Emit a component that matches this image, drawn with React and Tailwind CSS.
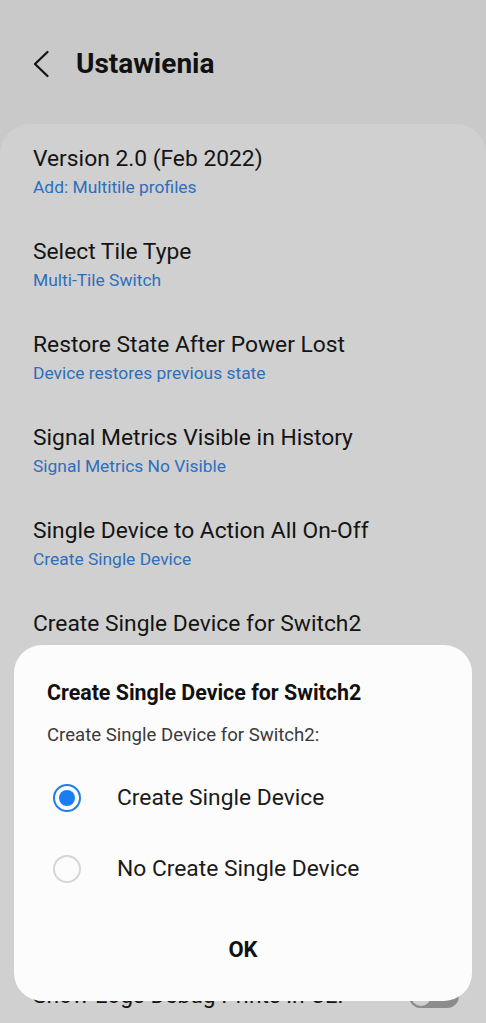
import { useState } from 'react';

const settings = [
  { id: 'version', title: 'Version 2.0 (Feb 2022)', value: 'Add: Multitile profiles' },
  { id: 'tileType', title: 'Select Tile Type', value: 'Multi-Tile Switch' },
  { id: 'restore', title: 'Restore State After Power Lost', value: 'Device restores previous state' },
  { id: 'metrics', title: 'Signal Metrics Visible in History', value: 'Signal Metrics No Visible' },
  { id: 'allOnOff', title: 'Single Device to Action All On-Off', value: 'Create Single Device' },
  { id: 'switch2', title: 'Create Single Device for Switch2', value: 'Create Single Device' },
  { id: 'switch3', title: 'Create Single Device for Switch3', value: 'No Create Single Device' },
  { id: 'switch4', title: 'Create Single Device for Switch4', value: 'No Create Single Device' },
  { id: 'switch5', title: 'Create Single Device for Switch5', value: 'No Create Single Device' },
];

const options = ['Create Single Device', 'No Create Single Device'];

function SettingRow({ item }) {
  return (
    <div className="pt-[21px] pb-[16px]">
      <div className="text-[22.8px] leading-[28px] text-[#141414]">{item.title}</div>
      <div className="text-[17.4px] leading-[28px] text-[#2d6fbd]">{item.value}</div>
    </div>
  );
}

function Radio({ checked }) {
  return checked ? (
    <span className="flex h-[28px] w-[28px] shrink-0 items-center justify-center rounded-full border-2 border-[#1f7fe8]">
      <span className="h-[16px] w-[16px] rounded-full bg-[#1a7ef0]" />
    </span>
  ) : (
    <span className="block h-[28px] w-[28px] shrink-0 rounded-full border-2 border-[#d6d6d6]" />
  );
}

export default function App() {
  const [selected, setSelected] = useState(0);

  return (
    <div
      className="relative h-[1023px] w-[486px] overflow-hidden bg-[#c9c9c9]"
      style={{ fontFamily: 'Roboto, "Noto Sans", sans-serif' }}
    >
      {/* Header */}
      <div className="flex h-[124px] items-center pt-[4px]">
        <svg className="ml-[33px] h-[28px] w-[16px] shrink-0" viewBox="0 0 16 28" fill="none">
          <polyline points="14.5,2 2,14 14.5,26" stroke="#111" strokeWidth="2.2" strokeLinecap="round" strokeLinejoin="round" />
        </svg>
        <h1 className="ml-[27px] text-[28px] font-bold leading-none text-[#111]">Ustawienia</h1>
      </div>

      {/* Settings list (dimmed behind the dialog) */}
      <div className="rounded-t-[30px] bg-[#d0d0d0] px-[33px]">
        {settings.map((item) => (
          <SettingRow key={item.id} item={item} />
        ))}
        <div className="flex items-center justify-between pt-[21px] pb-[22px]">
          <div className="text-[22.8px] leading-[28px] text-[#141414]">Show Logs Debug Prints in CLI</div>
          <div className="mr-[-6px] flex h-[24px] w-[50px] shrink-0 items-center rounded-full bg-[#8c8c8c]">
            <span className="h-[24px] w-[24px] rounded-full border-2 border-[#8c8c8c] bg-[#d0d0d0]" />
          </div>
        </div>
      </div>

      {/* Dialog */}
      <div className="absolute left-[14px] top-[645px] h-[356px] w-[458px] rounded-[28px] bg-[#fcfcfc] px-[33px] pt-[35px]">
        <h2 className="text-[21.4px] font-bold leading-[26px] text-[#111]">Create Single Device for Switch2</h2>
        <p className="mt-[18px] text-[18.6px] leading-[22px] text-[#3a3a3a]">Create Single Device for Switch2:</p>
        <div className="mt-[16px]">
          {options.map((label, i) => (
            <div
              key={label}
              onClick={() => setSelected(i)}
              className="flex h-[71px] cursor-pointer items-center"
            >
              <span className="ml-[6px] shrink-0">
                <Radio checked={selected === i} />
              </span>
              <span className="ml-[36px] text-[22.8px] leading-[28px] text-[#1a1a1a]">{label}</span>
            </div>
          ))}
        </div>
        <div className="mt-[32px] text-center text-[22px] font-bold leading-[28px] text-[#111]">OK</div>
      </div>
    </div>
  );
}
